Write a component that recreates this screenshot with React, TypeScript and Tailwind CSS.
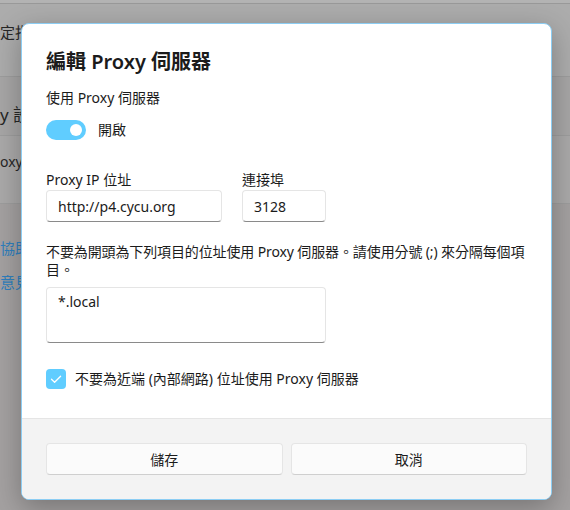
import React from "react";

const font = "font-['Noto_Sans','Noto_Sans_CJK_TC',sans-serif]";

export default function App() {
  return (
    <div className={`relative w-[570px] h-[510px] overflow-hidden bg-[#a4a1a1] ${font}`}>
      {/* underlying page (dimmed) */}
      <div className="flex flex-col">
        <div className="h-[4px] bg-[#b3b3b3] border-b border-[#999]" />
        <div className="h-[73px] bg-[#acacac] border-b border-[#9d9d9d] flex items-start pt-[18px]">
          <span className="text-[15px] leading-5 text-[#262626] whitespace-nowrap">定指令碼</span>
        </div>
        <div className="h-[59px] bg-[#a7a6a6] border-b border-[#9d9d9d] flex items-end pb-[8px]">
          <span className="text-[17px] leading-6 text-[#262626] whitespace-nowrap">y 設定</span>
        </div>
        <div className="h-[68px] bg-[#aaa9a9] border-b border-[#9d9d9d] flex items-start pt-[16px]">
          <span className="text-[14px] leading-5 text-[#262626] whitespace-nowrap">oxy</span>
        </div>
        <div className="flex flex-col pt-[34px] gap-[14px]">
          <span className="text-[15px] leading-5 text-[#2f7fbd] whitespace-nowrap">協助</span>
          <span className="text-[15px] leading-5 text-[#2f7fbd] whitespace-nowrap">意見</span>
        </div>
      </div>

      {/* dialog */}
      <div className="absolute left-[21px] top-[23px] w-[531px] rounded-[8px] border border-[#8ccdf3] bg-white overflow-hidden shadow-[0_8px_28px_rgba(0,0,0,0.28)] text-[#1b1b1b]">
        <div className="px-6 pt-6 pb-[29px] flex flex-col">
          <h1 className="text-[20px] leading-[28px] font-semibold">編輯 Proxy 伺服器</h1>
          <div className="mt-3 text-[14px] leading-5">使用 Proxy 伺服器</div>
          <div className="mt-3 flex items-center gap-3">
            <div className="w-10 h-5 rounded-full bg-[#60cdff] flex items-center justify-end pr-1">
              <div className="w-3 h-3 rounded-full bg-white" />
            </div>
            <span className="text-[14px] leading-5">開啟</span>
          </div>

          <div className="mt-[30px] flex gap-[20px]">
            <div className="flex flex-col w-[176px]">
              <span className="text-[14px] leading-5">Proxy IP 位址</span>
              <div className="h-8 rounded-[4px] border border-[#e5e5e5] border-b-[#8a8a8a] bg-white px-[11px] flex items-center text-[14px]">
                http://p4.cycu.org
              </div>
            </div>
            <div className="flex flex-col w-[84px]">
              <span className="text-[14px] leading-5">連接埠</span>
              <div className="h-8 rounded-[4px] border border-[#e5e5e5] border-b-[#8a8a8a] bg-white px-[11px] flex items-center text-[14px]">
                3128
              </div>
            </div>
          </div>

          <p className="mt-[21px] text-[14px] leading-[18px] tracking-[-0.12px]">
            不要為開頭為下列項目的位址使用 Proxy 伺服器。請使用分號 (;) 來分隔每個項目。
          </p>

          <div className="mt-2 w-[280px] h-[56px] rounded-[4px] border border-[#e5e5e5] border-b-[#8a8a8a] bg-white px-[11px] pt-[4px] text-[14px] leading-5">
            *.local
          </div>

          <div className="mt-[26px] flex items-center gap-[9px]">
            <div className="w-5 h-5 rounded-[4px] bg-[#60cdff] flex items-center justify-center">
              <svg width="20" height="20" viewBox="0 0 20 20" fill="none">
                <path d="M5.5 10.3 L8.6 13.3 L14.6 7.2" stroke="white" strokeWidth="1.3" strokeLinecap="round" strokeLinejoin="round" />
              </svg>
            </div>
            <span className="text-[14px] leading-5">不要為近端 (內部網路) 位址使用 Proxy 伺服器</span>
          </div>
        </div>

        <div className="border-t border-[#e5e5e5] bg-[#f3f3f3] p-6 flex gap-2">
          <button className="flex-1 h-8 rounded-[4px] border border-[#e5e5e5] border-b-[#cfcfcf] bg-[#fbfbfb] text-[14px] text-[#1b1b1b]">
            儲存
          </button>
          <button className="flex-1 h-8 rounded-[4px] border border-[#e5e5e5] border-b-[#cfcfcf] bg-[#fbfbfb] text-[14px] text-[#1b1b1b]">
            取消
          </button>
        </div>
      </div>
    </div>
  );
}
